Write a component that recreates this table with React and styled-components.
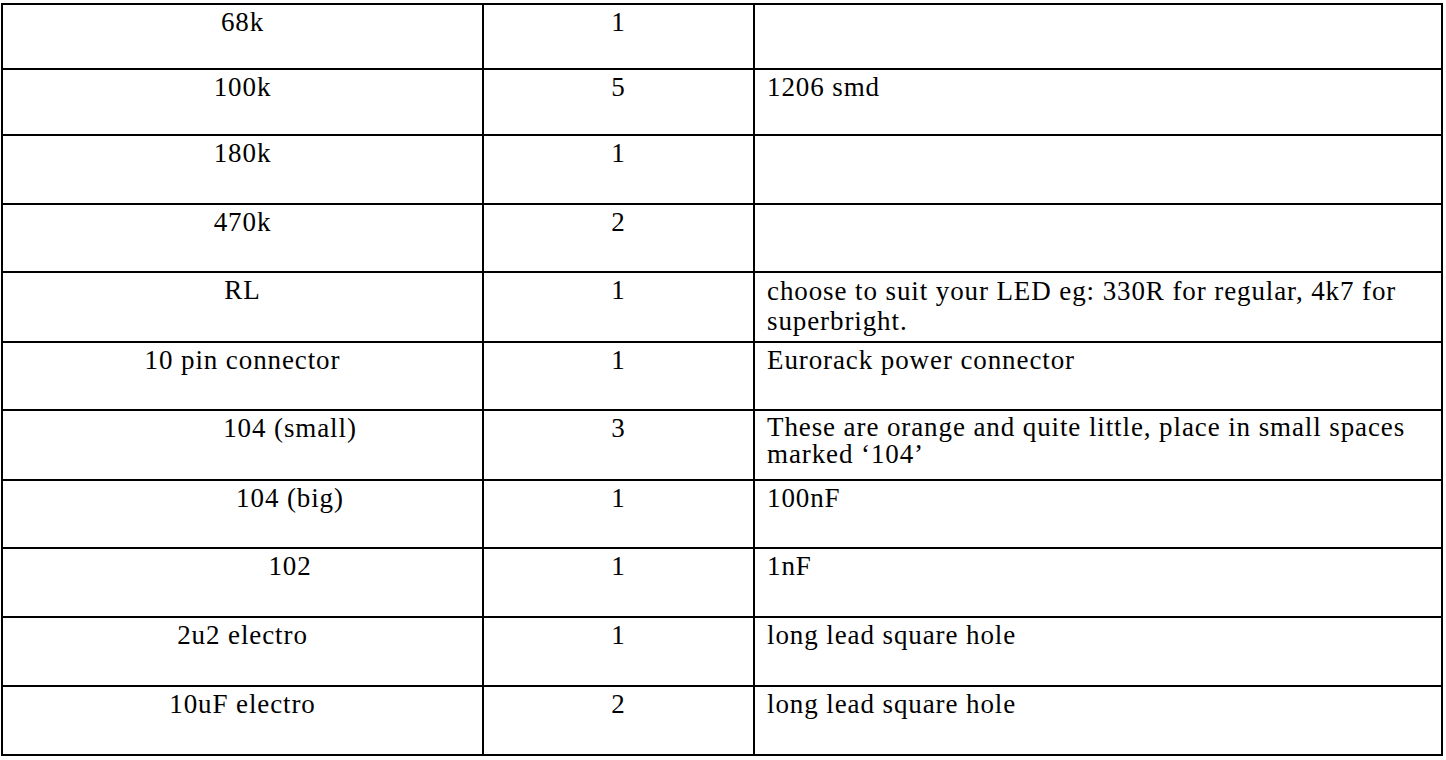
import React from "react";
import styled, { createGlobalStyle } from "styled-components";

const GlobalStyle = createGlobalStyle`
  html, body {
    margin: 0;
    padding: 0;
    background: #fff;
  }

  body {
    padding: 3px 0 0 1px;
    font-family: "Liberation Serif", "Times New Roman", serif;
    color: #000;
  }
`;

const Table = styled.div`
  width: 1442px;
  box-sizing: border-box;
  border-left: 2px solid #000;
  border-right: 2px solid #000;
  border-top: 2px solid #000;
`;

const Row = styled.div`
  display: grid;
  grid-template-columns: 481px 271px 1fr;
  box-sizing: border-box;
  height: ${props => props.height}px;
  border-bottom: 2px solid #000;
`;

const Cell = styled.div`
  box-sizing: border-box;
  padding: ${props => (props.wide ? "3px 10px 0 12px" : "3px 4px 0 4px")};
  padding-left: ${props => (props.offset ? `${props.offset}px` : undefined)};
  text-align: ${props => (props.wide ? "left" : "center")};
  font-size: 27px;
  line-height: ${props => props.lineHeight || 28}px;
  letter-spacing: 0.9px;
  border-right: ${props => (props.wide ? "none" : "2px solid #000")};
  overflow: hidden;
`;

const parts = [
  { name: "68k", qty: "1", note: "", height: 65 },
  { name: "100k", qty: "5", note: "1206 smd", height: 66 },
  { name: "180k", qty: "1", note: "", height: 69 },
  { name: "470k", qty: "2", note: "", height: 68 },
  {
    name: "RL",
    qty: "1",
    note: "choose to suit your LED eg: 330R for regular, 4k7 for superbright.",
    height: 70,
    lineHeight: 30,
  },
  {
    name: "10 pin connector",
    qty: "1",
    note: "Eurorack power connector",
    height: 68,
  },
  {
    name: "104 (small)",
    qty: "3",
    note: "These are orange and quite little, place in small spaces marked \u2018104\u2019",
    height: 70,
    offset: 99,
    lineHeight: 27,
  },
  { name: "104 (big)", qty: "1", note: "100nF", height: 68, offset: 99 },
  { name: "102", qty: "1", note: "1nF", height: 69, offset: 99 },
  { name: "2u2 electro", qty: "1", note: "long lead square hole", height: 69 },
  { name: "10uF electro", qty: "2", note: "long lead square hole", height: 69 },
];

const App = () => {
  return (
    <>
      <GlobalStyle />
      <Table>
        {parts.map(part => (
          <Row key={part.name} height={part.height}>
            <Cell offset={part.offset}>{part.name}</Cell>
            <Cell>{part.qty}</Cell>
            <Cell wide lineHeight={part.lineHeight}>
              {part.note}
            </Cell>
          </Row>
        ))}
      </Table>
    </>
  );
};

export default App;
